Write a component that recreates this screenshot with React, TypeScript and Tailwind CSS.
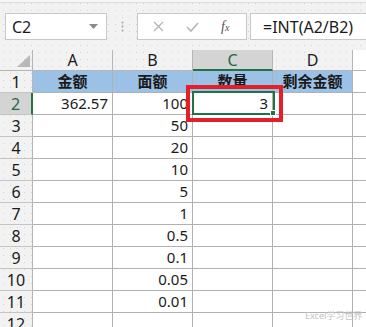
import React from "react";

const cols = ["A", "B", "C", "D"];
const headers = ["金额", "面额", "数量", "剩余金额"];
const bValues = ["100", "50", "20", "10", "5", "1", "0.5", "0.1", "0.05", "0.01"];

const dots = "bg-[#f2f2f2] bg-[radial-gradient(#d6d6d6_0.8px,transparent_0.8px)] bg-[size:7px_7px]";

export default function App() {
  const rows = Array.from({ length: 12 }, (_, i) => i + 1);

  return (
    <div
      className={`relative h-[327px] w-[366px] overflow-hidden ${dots} text-[#1a1a1a]`}
      style={{ fontFamily: '"Noto Sans", "Noto Sans CJK SC", sans-serif' }}
    >
      {/* toolbar strip */}
      <div className="h-[3px] border-b border-[#dedede] bg-[#f7f7f7]" />

      {/* formula bar */}
      <div className="flex h-[47px] items-start pt-[10px]">
        <div className="ml-[5px] flex h-[27px] w-[102px] items-center justify-between border border-[#c8c8c8] bg-white pl-[6px] pr-[8px]">
          <span className="text-[16px] leading-none">C2</span>
          <svg width="9" height="5" viewBox="0 0 9 5">
            <path d="M0 0h9L4.5 5z" fill="#8a8a8a" />
          </svg>
        </div>
        <div className="flex h-[27px] w-[30px] items-center justify-center">
          <svg width="3" height="11" viewBox="0 0 3 11">
            <circle cx="1.5" cy="1.5" r="1" fill="#a8a8a8" />
            <circle cx="1.5" cy="5.5" r="1" fill="#a8a8a8" />
            <circle cx="1.5" cy="9.5" r="1" fill="#a8a8a8" />
          </svg>
        </div>
        <div className="flex h-[27px] w-[110px] items-center border border-[#c8c8c8] bg-white">
          <svg className="ml-[15px]" width="11" height="11" viewBox="0 0 11 11">
            <path d="M1 1l9 9M10 1l-9 9" stroke="#b4b4b4" strokeWidth="1.3" />
          </svg>
          <svg className="ml-[22px]" width="13" height="10" viewBox="0 0 13 10">
            <path d="M1 5l4 4 7-8" stroke="#b4b4b4" strokeWidth="1.6" fill="none" />
          </svg>
          <span
            className="ml-[22px] text-[14px] italic leading-none text-[#555]"
            style={{ fontFamily: '"Liberation Serif", serif' }}
          >
            f<span className="text-[10px]">x</span>
          </span>
        </div>
        <div className="ml-[3px] flex h-[27px] flex-1 items-center border border-r-0 border-[#c8c8c8] bg-white pl-[12px]">
          <span className="text-[16px] leading-none">=INT(A2/B2)</span>
        </div>
      </div>

      {/* grid */}
      <div className="grid grid-cols-[33px_80px_80px_80px_80px_1fr] grid-rows-[21px_repeat(12,22px)]">
        <div className="relative border-b border-r border-[#b5b5b5]">
          <svg className="absolute bottom-[3px] right-[2px]" width="13" height="12" viewBox="0 0 13 12">
            <path d="M13 0V12H0z" fill="#b8b8b8" />
          </svg>
        </div>
        {cols.map((c) => (
          <div
            key={c}
            className={`flex items-center justify-center border-r border-[#b5b5b5] text-[16px] leading-none ${
              c === "C"
                ? "border-b-2 border-b-[#217346] bg-[#d4d4d4] text-[#1d6b3e]"
                : "border-b"
            }`}
          >
            {c}
          </div>
        ))}
        <div className="border-b border-[#b5b5b5] bg-white" />

        {rows.map((r) => (
          <React.Fragment key={r}>
            <div
              className={`flex items-center justify-center border-b border-[#c4c4c4] text-[16px] leading-none ${
                r === 2
                  ? "border-r-2 border-r-[#217346] bg-[#d4d4d4] text-[#1d6b3e]"
                  : "border-r border-r-[#b5b5b5]"
              }`}
            >
              {r}
            </div>
            {cols.map((c, ci) => {
              let content: string = "";
              if (r === 1) content = headers[ci];
              else if (r === 2 && c === "A") content = "362.57";
              else if (r === 2 && c === "C") content = "3";
              else if (c === "B" && r <= 11) content = bValues[r - 2];
              return (
                <div
                  key={c}
                  className={`flex items-center border-b border-r border-[#b1b1b1] text-[15px] leading-none ${
                    r === 1
                      ? "justify-center bg-[#9bc2e6] font-bold"
                      : "justify-end bg-white pr-[4px]"
                  }`}
                >
                  {content}
                </div>
              );
            })}
            <div className="border-b border-[#b1b1b1] bg-white" />
          </React.Fragment>
        ))}
      </div>

      {/* selected cell C2 */}
      <div className="absolute left-[192px] top-[91px] h-[24px] w-[83px] border-2 border-[#217346]" />
      <div className="absolute left-[270px] top-[110px] h-[6px] w-[6px] border border-white bg-[#217346]" />

      {/* red highlight */}
      <div className="absolute left-[186px] top-[85px] h-[37px] w-[97px] border-[4px] border-[#e3202a]" />

      {/* watermark */}
      <div className="absolute left-[305px] top-[311px] whitespace-nowrap text-[9px] leading-none text-[#c4c4c4]">
        Excel学习世界
      </div>
    </div>
  );
}
